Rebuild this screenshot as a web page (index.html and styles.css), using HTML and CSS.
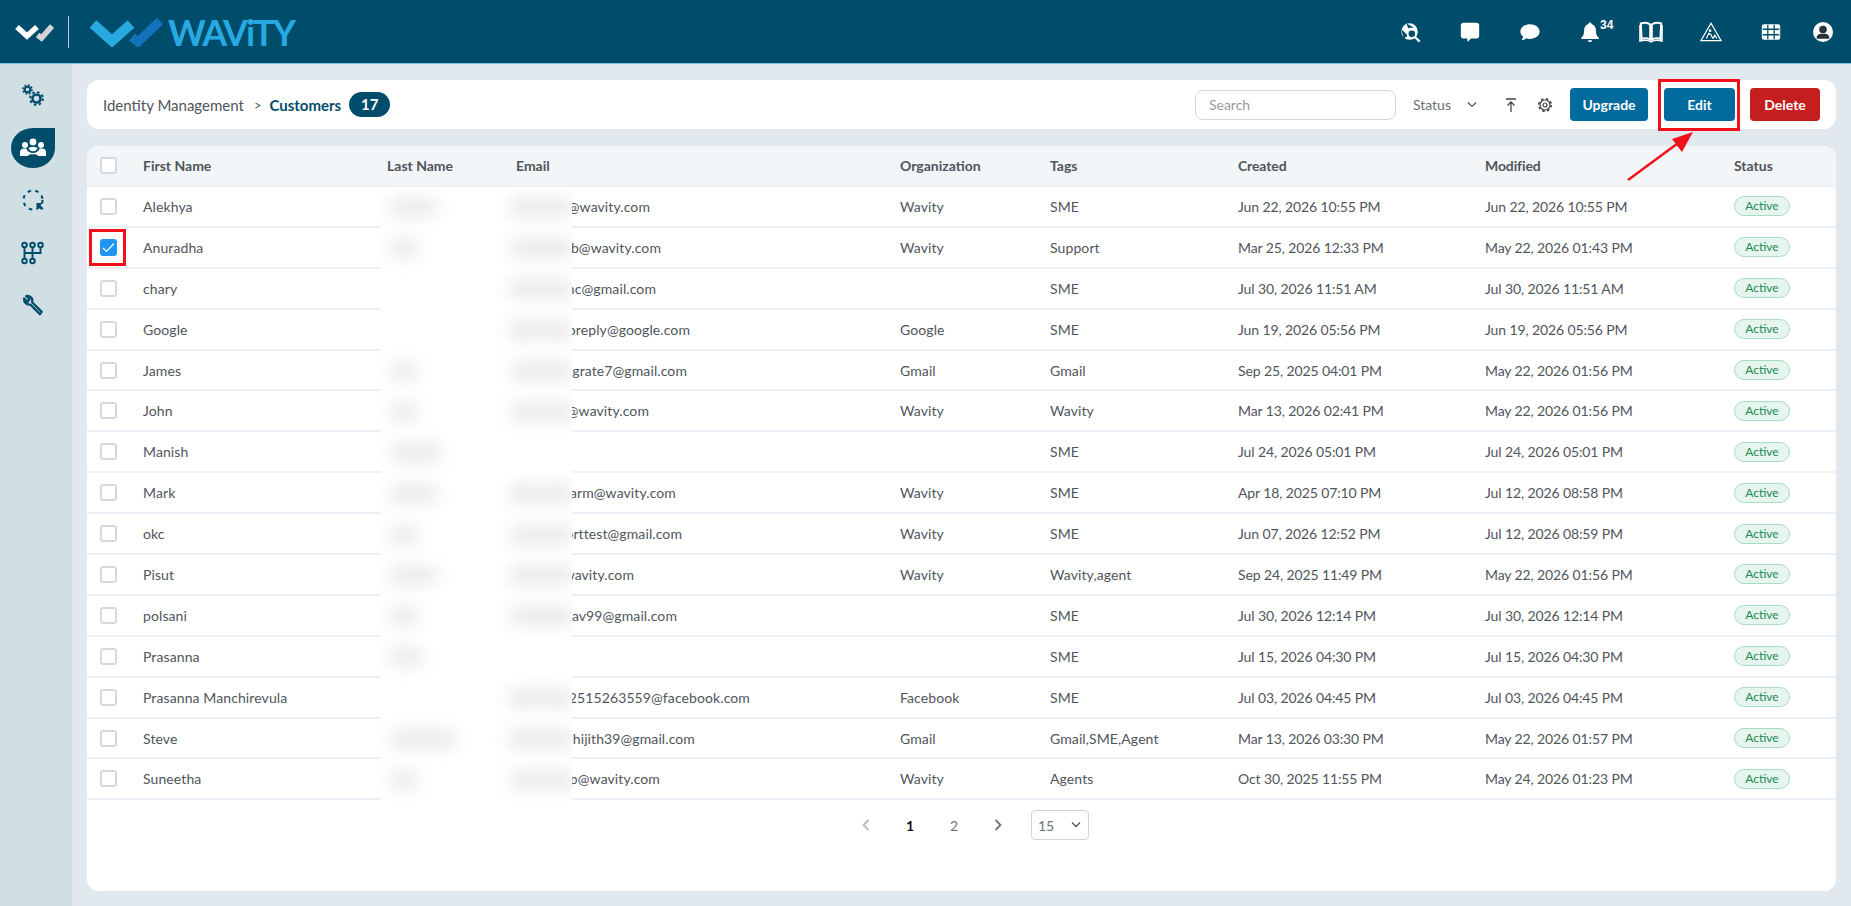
FILE: index.html
```html
<html>
<head>
<meta charset="utf-8">
<title>Customers</title>
<link rel="stylesheet" href="styles.css">
</head>
<body>

<header class="topbar">
    <svg class="mark" width="40" height="20" viewBox="0 0 40 20">
        <path d="M3 5 L13 14 L23 5" fill="none" stroke="#fff" stroke-width="5.5"/>
        <path d="M23.5 13 L27.5 16 L38 4" fill="none" stroke="#d2d6d8" stroke-width="5.5"/>
    </svg>
    <div class="divider"></div>
    <svg class="logo" width="74" height="30" viewBox="0 0 74 30">
        <path d="M3 7 L22 24 L41 7" fill="none" stroke="#27a9e1" stroke-width="10"/>
        <path d="M42 20 L48 25 L70 4" fill="none" stroke="#1272bc" stroke-width="9"/>
    </svg>
    <span class="wordmark">WAViTY</span>

    <div class="top-icons">
        <svg class="top-icon" viewBox="0 0 24 24">
            <circle cx="11.500" cy="11.500" r="9" fill="#fff"/>
            <path d="M2.500 9 L10 16 L5 19 Z M8 2.500 L16 7 L10 8 Z" fill="#004c6b"/>
            <circle cx="14" cy="14" r="4.600" fill="#004c6b" stroke="#fff" stroke-width="2"/>
            <path d="M17.500 17.500 L22.500 22.500" stroke="#fff" stroke-width="2.400"/>
        </svg>
        <svg class="top-icon" viewBox="0 0 24 24">
            <path d="M5 2 H19 A3 3 0 0 1 22 5 V16 A3 3 0 0 1 19 19 H13 L9.5 23 L9 19 H5 A3 3 0 0 1 2 16 V5 A3 3 0 0 1 5 2 Z" fill="#fff"/>
        </svg>
        <svg class="top-icon" viewBox="0 0 24 24">
            <path d="M12 3.5 C18 3.5 22.5 7 22.5 11.5 C22.5 16 18 19.5 12 19.5 C10.5 19.5 9 19.3 8 18.8 C6.5 20.3 4.5 21 2.5 21 C3.8 19.7 4.4 18.3 4.4 17 C2.6 15.6 1.5 13.7 1.5 11.5 C1.5 7 6 3.5 12 3.5 Z" fill="#fff"/>
        </svg>
        <div class="bell">
            <svg class="top-icon" viewBox="0 0 24 24">
                <path d="M12 1.5 C13 1.5 13.6 2.2 13.7 3.2 C17 4.2 18.5 7 18.5 10.5 C18.5 14.5 19.5 16.5 21.5 18 V19.5 H2.5 V18 C4.5 16.5 5.5 14.5 5.5 10.5 C5.5 7 7 4.2 10.3 3.2 C10.4 2.2 11 1.5 12 1.5 Z M9.5 21 H14.5 C14.3 22.3 13.3 23 12 23 C10.7 23 9.7 22.3 9.5 21 Z" fill="#fff"/>
            </svg>
            <span class="bell-count">34</span>
        </div>
        <svg class="top-icon book" viewBox="0 0 24 22">
            <path d="M1.800 2.500 C5 1.500 8.800 1.500 11.200 3.500 V18.500 C8.500 17 5 17 2.600 17.800 Z M22.200 2.500 C19 1.500 15.200 1.500 12.800 3.500 V18.500 C15.500 17 19 17 21.400 17.800 Z" fill="none" stroke="#fff" stroke-width="2"/>
            <path d="M1 4 V20 C5 19 9 19 12 20.800 C15 19 19 19 23 20 V4" fill="none" stroke="#fff" stroke-width="1.600"/>
        </svg>
        <svg class="top-icon" viewBox="0 0 24 24">
            <path d="M12 2.5 L23 21.5 H1 Z" fill="none" stroke="#fff" stroke-width="1.3"/>
            <circle cx="11" cy="10.5" r="1.4" fill="#fff"/>
            <path d="M7 19 L9.5 13.5 L12 15 L14 19 M14.5 19 L16 15.5 L18.5 19" fill="none" stroke="#fff" stroke-width="1.3"/>
        </svg>
        <svg class="top-icon" viewBox="0 0 24 24">
            <rect x="2" y="3.500" width="20" height="17" rx="2.500" fill="#fff"/>
            <path d="M8.500 4 V20 M15.500 4 V20 M3 9 H21 M3 15 H21" stroke="#004c6b" stroke-width="1.400"/>
        </svg>
        <svg class="top-icon avatar" viewBox="0 0 24 24">
            <circle cx="12" cy="12" r="12" fill="#fff"/>
            <circle cx="12" cy="9" r="4.6" fill="#2b3138"/>
            <path d="M4.5 20 V18 C4.5 15.5 7 14 9.5 14 H14.5 C17 14 19.5 15.5 19.5 18 V20 Z" fill="#2b3138"/>
        </svg>
    </div>
</header>

<div class="shell">
    <nav class="sidebar">
        <div class="side-item">
            <svg width="24" height="24" viewBox="0 0 24 24">
                <circle cx="6.5" cy="6.5" r="2.8" fill="none" stroke="#004c6b" stroke-width="2"/>
                <circle cx="6.5" cy="6.5" r="4.5" fill="none" stroke="#004c6b" stroke-width="1.6" stroke-dasharray="1.9 1.6"/>
                <circle cx="15.5" cy="15.5" r="4" fill="none" stroke="#004c6b" stroke-width="2.6"/>
                <circle cx="15.5" cy="15.5" r="6.4" fill="none" stroke="#004c6b" stroke-width="2" stroke-dasharray="2.5 2.5"/>
            </svg>
        </div>
        <div class="side-item side-active">
            <svg width="26" height="20" viewBox="0 0 26 20">
                <circle cx="13" cy="4" r="3.4" fill="#fff"/>
                <circle cx="5" cy="7" r="3" fill="#fff"/>
                <circle cx="21" cy="7" r="3" fill="#fff"/>
                <path d="M0 18 V14 C0 11.5 2 10.5 4 10.5 H6.5 C6.8 12.8 9.5 15 13 15 C16.5 15 19.200 12.8 19.500 10.500 H22 C24 10.500 26 11.500 26 14 V18 H18 C18 16.800 16 16.300 13 16.300 C10 16.300 8 16.800 8 18 Z" fill="#fff"/>
                <path d="M8.500 10 C9 12 11 13.300 13 13.300 C15 13.300 17 12 17.500 10 C16 8.800 10 8.800 8.500 10 Z" fill="#fff"/>
            </svg>
        </div>
        <div class="side-item">
            <svg width="24" height="24" viewBox="0 0 24 24">
                <circle cx="12" cy="12" r="9.500" fill="none" stroke="#004c6b" stroke-width="2" stroke-dasharray="3.500 4.300"/>
                <path d="M15.500 21 V15 H21.500 L19.500 17.200 L22.500 20.500 L20.500 22 L17.500 19 Z" fill="#004c6b"/>
            </svg>
        </div>
        <div class="side-item">
            <svg width="24" height="24" viewBox="0 0 24 24">
                <g fill="none" stroke="#004c6b" stroke-width="1.900">
                    <circle cx="3.500" cy="4" r="2.300"/>
                    <circle cx="11.500" cy="4" r="2.300"/>
                    <circle cx="19.500" cy="4" r="2.300"/>
                    <circle cx="3.500" cy="20" r="2.300"/>
                    <circle cx="11.500" cy="20" r="2.300"/>
                    <path d="M3.500 6.500 V17.500 M11.500 6.500 V17.500 M19.500 6.500 V12 H3.500"/>
                </g>
            </svg>
        </div>
        <div class="side-item">
            <svg width="22" height="22" viewBox="0 0 24 24">
                <path d="M21.500 19.500 L11 9 C12 6 10.500 2.500 6.500 2 L4.500 2.200 L8.200 5.800 L6 8.500 L2.300 5 C2 9 5 12 9 11.500 L19.500 22 Z" fill="none" stroke="#004c6b" stroke-width="2.500" stroke-linejoin="round"/>
            </svg>
        </div>
    </nav>

    <main class="content">
        <div class="toolbar">
            <div class="crumbs">
                <span>Identity Management</span>
                <span class="crumb-sep">&gt;</span>
                <b class="crumb-now">Customers</b>
                <span class="count-pill">17</span>
            </div>
            <div class="tools">
                <div class="search">Search</div>
                <span class="status-filter">Status</span>
                <svg class="chev" width="12" height="8" viewBox="0 0 12 8"><path d="M2 1.500 L6 5.500 L10 1.500" fill="none" stroke="#555" stroke-width="1.200"/></svg>
                <svg class="upload" width="14" height="16" viewBox="0 0 14 16"><path d="M2 2 H12 M7 15 V5 M3.500 8.500 L7 5 L10.500 8.500" fill="none" stroke="#444" stroke-width="1.300"/></svg>
                <svg class="cog" width="16" height="16" viewBox="0 0 16 16">
                    <circle cx="8" cy="8" r="5" fill="none" stroke="#444" stroke-width="1.200"/>
                    <circle cx="8" cy="8" r="6.300" fill="none" stroke="#444" stroke-width="1.500" stroke-dasharray="2.500 2.450"/>
                    <circle cx="8" cy="8" r="2" fill="none" stroke="#444" stroke-width="1.200"/>
                </svg>
                <button class="btn btn-upgrade">Upgrade</button>
                <button class="btn btn-edit">Edit</button>
                <button class="btn btn-delete">Delete</button>
            </div>
        </div>

        <section class="panel">
            <div class="row head">
                <div class="cell-check"><span class="box"></span></div>
                <div>First Name</div><div>Last Name</div><div>Email</div><div>Organization</div><div>Tags</div><div>Created</div><div>Modified</div><div>Status</div>
            </div>
            <div class="row">
                <div class="cell-check"><span class="box"></span></div>
                <div>Alekhya</div><div></div><div><span class="mail" style="width:134px">@wavity.com</span></div><div>Wavity</div><div>SME</div><div>Jun 22, 2026 10:55 PM</div><div>Jun 22, 2026 10:55 PM</div><div><span class="pill">Active</span></div>
            </div>
            <div class="row">
                <div class="cell-check"><span class="box box-on"><svg width="13" height="11" viewBox="0 0 13 11"><path d="M1 6 L4.500 9.500 L12 1.500" fill="none" stroke="#fff" stroke-width="1.200"/></svg></span></div>
                <div>Anuradha</div><div></div><div><span class="mail" style="width:145px">b@wavity.com</span></div><div>Wavity</div><div>Support</div><div>Mar 25, 2026 12:33 PM</div><div>May 22, 2026 01:43 PM</div><div><span class="pill">Active</span></div>
            </div>
            <div class="row">
                <div class="cell-check"><span class="box"></span></div>
                <div>chary</div><div></div><div><span class="mail" style="width:140px">nc@gmail.com</span></div><div></div><div>SME</div><div>Jul 30, 2026 11:51 AM</div><div>Jul 30, 2026 11:51 AM</div><div><span class="pill">Active</span></div>
            </div>
            <div class="row">
                <div class="cell-check"><span class="box"></span></div>
                <div>Google</div><div></div><div><span class="mail" style="width:174px">oreply@google.com</span></div><div>Google</div><div>SME</div><div>Jun 19, 2026 05:56 PM</div><div>Jun 19, 2026 05:56 PM</div><div><span class="pill">Active</span></div>
            </div>
            <div class="row">
                <div class="cell-check"><span class="box"></span></div>
                <div>James</div><div></div><div><span class="mail" style="width:171px">grate7@gmail.com</span></div><div>Gmail</div><div>Gmail</div><div>Sep 25, 2025 04:01 PM</div><div>May 22, 2026 01:56 PM</div><div><span class="pill">Active</span></div>
            </div>
            <div class="row">
                <div class="cell-check"><span class="box"></span></div>
                <div>John</div><div></div><div><span class="mail" style="width:133px">@wavity.com</span></div><div>Wavity</div><div>Wavity</div><div>Mar 13, 2026 02:41 PM</div><div>May 22, 2026 01:56 PM</div><div><span class="pill">Active</span></div>
            </div>
            <div class="row">
                <div class="cell-check"><span class="box"></span></div>
                <div>Manish</div><div></div><div></div><div></div><div>SME</div><div>Jul 24, 2026 05:01 PM</div><div>Jul 24, 2026 05:01 PM</div><div><span class="pill">Active</span></div>
            </div>
            <div class="row">
                <div class="cell-check"><span class="box"></span></div>
                <div>Mark</div><div></div><div><span class="mail" style="width:160px">arm@wavity.com</span></div><div>Wavity</div><div>SME</div><div>Apr 18, 2025 07:10 PM</div><div>Jul 12, 2026 08:58 PM</div><div><span class="pill">Active</span></div>
            </div>
            <div class="row">
                <div class="cell-check"><span class="box"></span></div>
                <div>okc</div><div></div><div><span class="mail" style="width:166px">orttest@gmail.com</span></div><div>Wavity</div><div>SME</div><div>Jun 07, 2026 12:52 PM</div><div>Jul 12, 2026 08:59 PM</div><div><span class="pill">Active</span></div>
            </div>
            <div class="row">
                <div class="cell-check"><span class="box"></span></div>
                <div>Pisut</div><div></div><div><span class="mail" style="width:118px">wavity.com</span></div><div>Wavity</div><div>Wavity,agent</div><div>Sep 24, 2025 11:49 PM</div><div>May 22, 2026 01:56 PM</div><div><span class="pill">Active</span></div>
            </div>
            <div class="row">
                <div class="cell-check"><span class="box"></span></div>
                <div>polsani</div><div></div><div><span class="mail" style="width:161px">av99@gmail.com</span></div><div></div><div>SME</div><div>Jul 30, 2026 12:14 PM</div><div>Jul 30, 2026 12:14 PM</div><div><span class="pill">Active</span></div>
            </div>
            <div class="row">
                <div class="cell-check"><span class="box"></span></div>
                <div>Prasanna</div><div></div><div></div><div></div><div>SME</div><div>Jul 15, 2026 04:30 PM</div><div>Jul 15, 2026 04:30 PM</div><div><span class="pill">Active</span></div>
            </div>
            <div class="row">
                <div class="cell-check"><span class="box"></span></div>
                <div>Prasanna Manchirevula</div><div></div><div><span class="mail" style="width:234px">2515263559@facebook.com</span></div><div>Facebook</div><div>SME</div><div>Jul 03, 2026 04:45 PM</div><div>Jul 03, 2026 04:45 PM</div><div><span class="pill">Active</span></div>
            </div>
            <div class="row">
                <div class="cell-check"><span class="box"></span></div>
                <div>Steve</div><div></div><div><span class="mail" style="width:179px">hijith39@gmail.com</span></div><div>Gmail</div><div>Gmail,SME,Agent</div><div>Mar 13, 2026 03:30 PM</div><div>May 22, 2026 01:57 PM</div><div><span class="pill">Active</span></div>
            </div>
            <div class="row">
                <div class="cell-check"><span class="box"></span></div>
                <div>Suneetha</div><div></div><div><span class="mail" style="width:144px">p@wavity.com</span></div><div>Wavity</div><div>Agents</div><div>Oct 30, 2025 11:55 PM</div><div>May 24, 2026 01:23 PM</div><div><span class="pill">Active</span></div>
            </div>

            <div class="pager">
                <span class="pg"><svg width="8" height="12" viewBox="0 0 8 12"><path d="M6.500 1 L1.500 6 L6.500 11" fill="none" stroke="#b5bac1" stroke-width="1.800"/></svg></span>
                <span class="pg pg-now">1</span>
                <span class="pg">2</span>
                <span class="pg"><svg width="8" height="12" viewBox="0 0 8 12"><path d="M1.500 1 L6.500 6 L1.500 11" fill="none" stroke="#6b7480" stroke-width="1.800"/></svg></span>
                <div class="per-page">15
                    <svg width="12" height="8" viewBox="0 0 12 8"><path d="M2 1.500 L6 5.500 L10 1.500" fill="none" stroke="#555" stroke-width="1.300"/></svg>
                </div>
            </div>

            <!-- blurred-out names and addresses -->
            <div class="smudges">
                <div class="smudge-row"><i class="sm-name"></i><i class="sm-mail"></i></div>
                <div class="smudge-row"><i class="sm-name sm-short"></i><i class="sm-mail"></i></div>
                <div class="smudge-row"><i class="sm-none"></i><i class="sm-mail"></i></div>
                <div class="smudge-row"><i class="sm-none"></i><i class="sm-mail"></i></div>
                <div class="smudge-row"><i class="sm-name sm-short"></i><i class="sm-mail"></i></div>
                <div class="smudge-row"><i class="sm-name sm-short"></i><i class="sm-mail"></i></div>
                <div class="smudge-row"><i class="sm-name"></i></div>
                <div class="smudge-row"><i class="sm-name"></i><i class="sm-mail"></i></div>
                <div class="smudge-row"><i class="sm-name sm-short"></i><i class="sm-mail"></i></div>
                <div class="smudge-row"><i class="sm-name"></i><i class="sm-mail"></i></div>
                <div class="smudge-row"><i class="sm-name sm-short"></i><i class="sm-mail"></i></div>
                <div class="smudge-row"><i class="sm-name sm-short"></i></div>
                <div class="smudge-row"><i class="sm-none"></i><i class="sm-mail"></i></div>
                <div class="smudge-row"><i class="sm-name sm-long"></i><i class="sm-mail"></i></div>
                <div class="smudge-row"><i class="sm-name sm-short"></i><i class="sm-mail"></i></div>
            </div>
        </section>
    </main>
</div>

<!-- red markup drawn over the screenshot -->
<div class="mark-box mark-check"></div>
<div class="mark-box mark-edit"></div>
<svg class="mark-arrow" width="76" height="56" viewBox="0 0 76 56">
    <path d="M3 52 L60 10" stroke="#f2101a" stroke-width="2.500"/>
    <path d="M68 4 L47 11 L57 24 Z" fill="#f2101a"/>
</svg>

</body>
</html>
```

FILE: styles.css
```css
html, body {
    height: 100%;
}

body {
    margin: 0;
    overflow: hidden;
    position: relative;
    font-family: "Lato", "Liberation Sans", sans-serif;
    font-size: 14px;
    color: #50555c;
    background: #e1e9ef;
}

/* top bar */
.topbar {
    display: flex;
    align-items: center;
    height: 63px;
    padding-left: 14px;
    background: #004c6b;
    border-bottom: 1px solid #7fc4dc;
}

.divider {
    width: 1px;
    height: 32px;
    margin: 0 21px 0 14px;
    background: #b9c9d1;
}

.logo {
    margin-right: 4px;
}

.wordmark {
    font-size: 36px;
    font-weight: bold;
    line-height: 1;
    letter-spacing: -2px;
    color: #27a9e1;
}

.top-icons {
    display: flex;
    align-items: center;
    margin-left: auto;
    padding-right: 18px;
}

.top-icon {
    display: block;
    width: 22px;
    height: 22px;
    margin-right: 38px;
}

.bell {
    position: relative;
}

.bell-count {
    position: absolute;
    top: -3px;
    left: 21px;
    font-family: "Liberation Sans", sans-serif;
    font-size: 12px;
    font-weight: bold;
    color: #fff;
}

.book {
    width: 24px;
    margin-right: 37px;
}

.avatar {
    width: 20px;
    height: 20px;
    margin-right: 0;
    margin-left: -7px;
}

/* left rail */
.shell {
    display: flex;
    height: 842px;
}

.sidebar {
    display: flex;
    flex-direction: column;
    align-items: center;
    width: 72px;
    padding-top: 11px;
    padding-right: 7px;
    box-sizing: border-box;
    background: #d0dfe4;
}

.side-item {
    display: flex;
    align-items: center;
    justify-content: center;
    flex: none;
    width: 44px;
    height: 40px;
    margin-bottom: 12.5px;
}

.side-active {
    background: #004c6b;
    border-radius: 50% 0 50% 50%;
}

/* main area */
.content {
    flex: 1;
    padding: 16px 15px 15px;
    min-width: 0;
}

.toolbar {
    display: flex;
    align-items: center;
    justify-content: space-between;
    height: 49px;
    margin-bottom: 17px;
    padding: 0 16px;
    background: #fff;
    border-radius: 12px;
}

.crumbs {
    display: flex;
    align-items: center;
    font-size: 15px;
}

.crumb-sep {
    margin: 0 8px 0 10px;
    font-size: 13px;
}

.crumb-now {
    color: #004c6b;
}

.count-pill {
    margin-left: 8px;
    width: 41px;
    height: 25px;
    line-height: 25px;
    text-align: center;
    font-weight: bold;
    color: #fff;
    background: #004c6b;
    border-radius: 13px;
}

.tools {
    display: flex;
    align-items: center;
}

.search {
    width: 186px;
    height: 28px;
    line-height: 28px;
    padding-left: 13px;
    color: #9a9a9a;
    border: 1px solid #d5d7da;
    border-radius: 8px;
}

.status-filter {
    margin-left: 17px;
    color: #6b6f75;
}

.chev {
    margin-left: 15px;
}

.upload {
    margin-left: 26px;
}

.cog {
    margin-left: 19px;
}

.btn {
    height: 33px;
    border: 0;
    border-radius: 4px;
    font-family: inherit;
    font-size: 14px;
    font-weight: bold;
    color: #fff;
    background: #006b9c;
}

.btn-upgrade {
    width: 78px;
    margin-left: 17px;
}

.btn-edit {
    width: 71px;
    margin-left: 16px;
}

.btn-delete {
    width: 70px;
    margin-left: 15px;
    background: #c41e1e;
}

/* customers table */
.panel {
    position: relative;
    height: 745px;
    background: #fff;
    border-radius: 12px;
    overflow: hidden;
}

.row {
    display: grid;
    grid-template-columns: 56px 244px 129px 384px 150px 188px 247px 249px 1fr;
    align-items: center;
    height: 40.9px;
    box-sizing: border-box;
    letter-spacing: .1px;
    border-bottom: 2px solid #edf0f4;
}

.row > div:nth-child(7), .row > div:nth-child(8) {
    letter-spacing: -.12px;
}

.head {
    height: 41px;
    font-weight: bold;
    letter-spacing: 0;
    color: #50555c;
    background: #f3f6f8;
}

.cell-check {
    padding-left: 13px;
}

.box {
    display: block;
    width: 17px;
    height: 17px;
    box-sizing: border-box;
    border: 2px solid #d5d9e0;
    border-radius: 3px;
    background: #fff;
}

.box-on {
    display: flex;
    align-items: center;
    justify-content: center;
    border: 0;
    background: #2196f3;
}

.mail {
    display: inline-block;
    text-align: right;
    white-space: nowrap;
}

.pill {
    display: inline-block;
    width: 56px;
    height: 20px;
    box-sizing: border-box;
    line-height: 18px;
    text-align: center;
    font-size: 12px;
    letter-spacing: 0;
    color: #1a8a55;
    background: #e6f5ee;
    border: 1px solid #a8dcc3;
    border-radius: 10px;
}

.pager {
    display: flex;
    align-items: center;
    justify-content: center;
    padding: 10px 0 0 10px;
}

.pg {
    display: flex;
    align-items: center;
    justify-content: center;
    width: 44px;
    color: #6b7480;
}

.pg-now {
    font-weight: bold;
    color: #111;
}

.per-page {
    display: flex;
    align-items: center;
    justify-content: space-between;
    width: 58px;
    height: 30px;
    margin-left: 11px;
    padding: 0 6px;
    box-sizing: border-box;
    color: #6b7480;
    border: 1px solid #d0d4da;
    border-radius: 4px;
}

/* covers names and addresses */
.smudges {
    position: absolute;
    left: 294px;
    top: 41px;
    width: 191px;
    height: 617px;
    background: #fff;
    overflow: hidden;
}

.smudge-row {
    display: flex;
    align-items: center;
    height: 40.9px;
}

.smudge-row i {
    display: block;
    height: 14px;
    background: #e2e2e2;
    filter: blur(9px);
}

.smudge-row .sm-none {
    width: 60px;
    margin-right: 74px;
    background: none;
}

.sm-name {
    width: 50px;
    margin: 0 74px 0 10px;
}

.sm-short {
    width: 30px;
    margin-right: 94px;
}

.sm-long {
    width: 70px;
    margin-right: 54px;
}

.sm-mail {
    width: 70px;
}

/* red markup */
.mark-box {
    position: absolute;
    box-sizing: border-box;
    border: 3px solid #f2101a;
}

.mark-check {
    left: 89px;
    top: 229px;
    width: 37px;
    height: 37px;
}

.mark-edit {
    left: 1658px;
    top: 79px;
    width: 82px;
    height: 52px;
}

.mark-arrow {
    position: absolute;
    left: 1625px;
    top: 128px;
}
```
